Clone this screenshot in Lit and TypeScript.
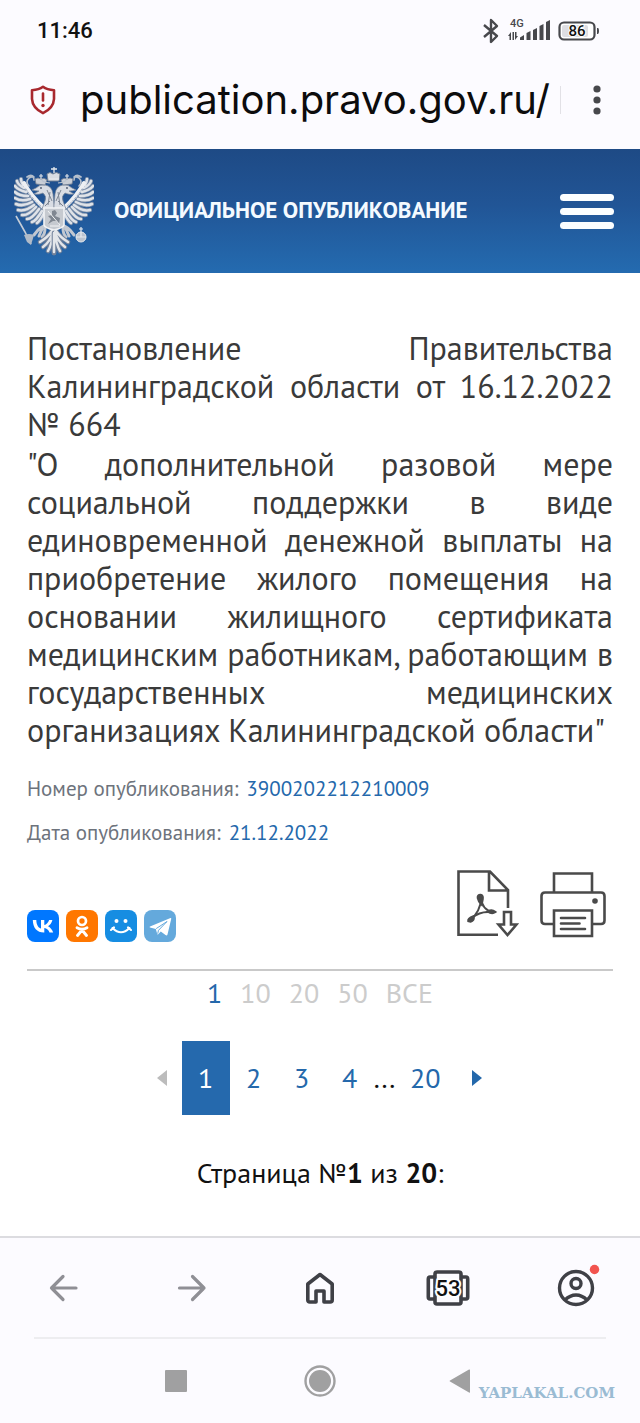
import { LitElement, html, css, svg } from 'lit';
import { customElement, property, state } from 'lit/decorators.js';
import { classMap } from 'lit/directives/class-map.js';

// Feathers of one wing, root to tip; the other wing is mirrored.
const FEATHERS = [
  'M9 20 Q7 17 7 14',
  'M10 23 Q4 20 3 16',
  'M12 27 Q4 25 1 21',
  'M14 31 Q5 31 1 27',
  'M16 34 Q7 37 1 33',
  'M18 37 Q9 42 2 39',
  'M20 40 Q11 47 4 45',
  'M22 42 Q14 51 8 50',
  'M25 44 Q18 54 13 54',
  'M28 46 Q22 56 18 57',
  'M30 48 Q26 56 23 58',
];

@customElement('state-emblem')
export class StateEmblem extends LitElement {
  static override styles = css`
    :host {
      display: block;
      width: 80px;
      height: 92px;
    }

    svg {
      display: block;
      width: 100%;
      height: 100%;
    }
  `;

  private _half() {
    return svg`
      <g stroke-linecap="round" fill="none">
        ${FEATHERS.map((d) => svg`<path d=${d} stroke="#7d8fa9" stroke-width="4.2" />`)}
        ${FEATHERS.map((d) => svg`<path d=${d} stroke="#dfe3e9" stroke-width="2.5" />`)}
        <path d="M10 18 Q17 31 30 43" stroke="#eef0f3" stroke-width="4" />
        <path d="M12 24 Q19 35 29 43" stroke="#8e9bb0" stroke-width="1" stroke-dasharray="1.5 2" />
        <path d="M15 21 Q11 17 15 13 Q20 10 20 15 M13 12 Q17 9 20 12" stroke="#b5bfcc" stroke-width="1.7" />
      </g>
      <path d="M40 40 L39 29 Q38 21 31 20 Q26 19 22 23 L18 25 Q22 26 25 26 L20 29 Q25 30 29 28 Q33 31 31 36 L28 44 L40 50 Z" fill="#d9dde4" stroke="#7c8899" stroke-width="0.7" />
      <path d="M36 27 L34 40 M33 25 L38 36 M31 41 L36 36" stroke="#7c8593" stroke-width="1" fill="none" />
      <circle cx="27" cy="23" r="0.9" fill="#49566c" />
      <path d="M22 19 L21 14 Q24 12 27 14 Q30 12 33 15 L31 20 Z" fill="#c9ced6" stroke="#717e91" stroke-width="0.8" />
      <path d="M27 9 V14 M25 11 H29" stroke="#dce1e8" stroke-width="1.2" />
      <path d="M33 60 Q28 61 24 65 L20 70 M28 64 L25 71 M31 63 Q31 69 28 72" stroke="#c2c8d1" stroke-width="3" fill="none" stroke-linecap="round" />
      <path d="M38 66 Q34 72 26 77 M39 67 Q36 77 29 82 M39 68 Q38 79 34 86 M40 68 V88" stroke="#71819a" stroke-width="4.6" fill="none" stroke-linecap="round" />
      <path d="M38 66 Q34 72 26 77 M39 67 Q36 77 29 82 M39 68 Q38 79 34 86 M40 68 V87" stroke="#e3e6ea" stroke-width="2.5" fill="none" stroke-linecap="round" />
    `;
  }

  override render() {
    return html`
      <svg viewBox="0 0 80 92" role="img" aria-label="Герб России">
        <g>${this._half()}</g>
        <g transform="translate(80 0) scale(-1 1)">${this._half()}</g>
        <path d="M34 16 L33 9 Q36 6 39 9 Q42 6 46 9 L45 16 Z" fill="#d9dde3" stroke="#717e91" stroke-width="0.9" />
        <path d="M40 2 V8 M37 4 H43 M35 14 H45" stroke="#e5e8ec" stroke-width="1.3" />
        <path d="M36 18 Q28 17 28 15 M44 18 Q52 17 52 15" stroke="#bac3cf" stroke-width="1.2" fill="none" />
        <path d="M30 43 H50 V60 Q49 63 40 65 Q31 63 30 60 Z" fill="#c6cad0" stroke="#f2f3f5" stroke-width="1.6" />
        <path d="M34 59 L37 54 L34 51 L38 50 L38 46 L41 45 L43 48 L41 51 L46 53 L45 59 L42 56 L39 56 Z" fill="#808791" />
        <path d="M34 46 L46 60 M36 61 H46" stroke="#f4f5f6" stroke-width="1" />
        <path d="M2 51 L11 67 L17 79" stroke="#c4ccd7" stroke-width="1.6" fill="none" />
        <path d="M10 70 Q15 68 20 70 L17 80 L13 77 Z" fill="#b1bbc8" />
        <circle cx="67" cy="72" r="5" fill="#bcc4cf" stroke="#e6e9ed" stroke-width="1" />
        <path d="M67 62 V67 M65 64 H69 M62 72 H72 M67 67 V72" stroke="#e6e9ed" stroke-width="1.2" />
      </svg>
    `;
  }
}

@customElement('phone-status')
export class PhoneStatus extends LitElement {
  static override styles = css`
    :host {
      display: flex;
      align-items: center;
      justify-content: space-between;
      height: 60px;
      padding: 2px 40px 0 37px;
      box-sizing: border-box;
      font: 500 22px/28px Roboto, sans-serif;
      color: #111;
    }

    .icons {
      display: flex;
      align-items: center;
      gap: 8px;
    }

    svg {
      display: block;
    }
  `;

  override render() {
    return html`
      <time>11:46</time>
      <div class="icons">
        <svg width="18" height="26" viewBox="0 0 18 26" fill="none" stroke="#47484c" stroke-width="2.4" stroke-linejoin="round">
          <path d="M2 7 L15 18 L9 24 V2 L15 8 L2 19" />
        </svg>
        <svg width="42" height="26" viewBox="0 0 42 26" fill="#47484c">
          <text x="2" y="9" font-family="Roboto, sans-serif" font-size="11">4G</text>
          <path d="M0 18 L3 14 V22 H1.5 V18 Z M4.5 14 H6 V22 H4.5 Z M7 14 V22 L10 18 H8.5 V14 Z" />
          <path d="M12 22 V19.5 L16 17 V22 Z M18.5 22 V15 L22.5 13 V22 Z M25 22 V12 L29 10 V22 Z M31.5 22 V8 L35.5 6 V22 Z M38 22 V4 L42 2 V22 Z" />
        </svg>
        <svg width="42" height="20" viewBox="0 0 42 20">
          <rect x="1.5" y="1.5" width="35" height="17" rx="4.5" fill="#fff" stroke="#47484c" stroke-width="2.2" />
          <rect x="4" y="4" width="26" height="12" rx="2" fill="#dedee2" />
          <path d="M39 7 H40 Q41 7 41 10 Q41 13 40 13 H39 Z" fill="#47484c" />
          <text x="19" y="15" text-anchor="middle" font-family="Roboto, sans-serif" font-size="15" font-weight="500" stroke="#fff" stroke-width="2" paint-order="stroke" fill="#111">86</text>
        </svg>
      </div>
    `;
  }
}

@customElement('share-button')
export class ShareButton extends LitElement {
  @property() network = '';

  static override styles = css`
    :host {
      display: block;
    }

    a,
    svg {
      display: block;
      width: 32px;
      height: 32px;
    }
  `;

  private _glyph() {
    switch (this.network) {
      case 'VK':
        return svg`
          <rect width="32" height="32" rx="8" fill="#07f" />
          <path d="M16.9 22.5 C9.9 22.5 6 17.8 5.8 10 H9.3 C9.4 15.7 12 18.1 14 18.6 V10 H17.3 V14.9 C19.3 14.7 21.4 12.5 22.1 10 H25.4 C24.9 13 22.6 15.3 21 16.2 C22.6 17 25.2 19 26.2 22.5 H22.5 C21.7 20.1 19.8 18.2 17.3 18 V22.5 Z" fill="#fff" />`;
      case 'OK':
        return svg`
          <rect width="32" height="32" rx="8" fill="#f70" />
          <circle cx="16" cy="11" r="4" fill="none" stroke="#fff" stroke-width="2.7" />
          <path d="M11 17.8 Q16 20.8 21 17.8 M16 20 L11.5 25.5 M16 20 L20.5 25.5" fill="none" stroke="#fff" stroke-width="2.9" stroke-linecap="round" />`;
      case 'Мой Мир':
        return svg`
          <rect width="32" height="32" rx="8" fill="#168de2" />
          <circle cx="11.5" cy="11" r="2" fill="#fff" />
          <circle cx="20.5" cy="11" r="2" fill="#fff" />
          <path d="M7.5 18 Q16 26.5 24.5 18 M6 20 L9 17.4 M23 17.4 L26 20" fill="none" stroke="#fff" stroke-width="2.1" stroke-linecap="round" />`;
      default:
        return svg`
          <rect width="32" height="32" rx="8" fill="#64a9dc" />
          <path d="M6 16.5 L26.5 8 Q27.5 7.8 27.2 9 L23.5 24.5 Q23 26 21.5 25 L16.8 21.4 L14.2 24.2 Q13.4 24.8 13.1 23.5 L11.8 19 L6 17.5 Q5 17 6 16.5 Z" fill="#fff" />
          <path d="M12.2 18.6 L23 11.5 L14.5 20.3 L13.7 23.7" fill="none" stroke="#64a9dc" stroke-width="1" />`;
    }
  }

  override render() {
    return html`
      <a href="#" aria-label=${this.network}>
        <svg viewBox="0 0 32 32">${this._glyph()}</svg>
      </a>
    `;
  }
}

@customElement('app-root')
export class AppRoot extends LitElement {
  @state() private _page = 1;
  @state() private _size = '1';

  static override styles = css`
    :host {
      display: block;
      position: relative;
      background: #fff;
      color: #111;
      font-family: 'PT Sans', 'Noto Sans', sans-serif;
    }

    svg {
      display: block;
    }

    a {
      color: #2468ab;
      text-decoration: none;
    }

    button {
      display: flex;
      align-items: center;
      justify-content: center;
      padding: 0;
      border: none;
      background: none;
      font: inherit;
      color: inherit;
      cursor: pointer;
    }

    .browser-top {
      background: #fcfbff;
    }

    .address {
      display: flex;
      align-items: center;
      height: 89px;
      padding: 0 38px 10px 30px;
      box-sizing: border-box;
    }

    .url {
      flex: 1;
      min-width: 0;
      margin: 0 0 0 24px;
      overflow: hidden;
      font: 400 40px/52px Inter, sans-serif;
      white-space: nowrap;
      color: #0c0c0d;
    }

    .divider {
      width: 1px;
      height: 28px;
      margin-right: 31px;
      background: #e2e1e6;
    }

    .banner {
      display: flex;
      align-items: center;
      height: 124px;
      padding: 0 26px 0 14px;
      box-sizing: border-box;
      background: linear-gradient(#1e4a85, #215596 45%, #246bb0);
    }

    .banner-title {
      flex: 1;
      margin: 0 0 2px 20px;
      font-size: 23px;
      font-weight: 700;
      line-height: 28px;
      color: #f4faff;
    }

    .burger {
      flex-direction: column;
      gap: 7px;
    }

    .burger span {
      width: 54px;
      height: 7px;
      border-radius: 4px;
      background: #fbfeff;
    }

    .document {
      padding: 56px 27px 0;
    }

    .subject {
      margin: 0 0 2px;
      font-size: 32px;
      line-height: 38px;
      text-align: justify;
      color: #3a3a3a;
    }

    .meta {
      display: grid;
      gap: 14px;
      margin: 25px 0 0;
    }

    .meta div {
      display: flex;
      align-items: baseline;
      gap: 8px;
      line-height: 30px;
    }

    .meta dt {
      font-size: 21px;
      color: #6d737c;
    }

    .meta dd {
      margin: 0;
      font-size: 21px;
    }

    .actions {
      display: flex;
      align-items: flex-end;
      justify-content: space-between;
      margin-top: 22px;
      padding-bottom: 27px;
      border-bottom: 2px solid #c9c9c9;
    }

    .share {
      display: flex;
      gap: 7px;
    }

    .files {
      display: flex;
      gap: 21px;
      padding: 0 7px 4px 0;
    }

    .sizes {
      display: flex;
      justify-content: center;
      gap: 18px;
      padding-top: 4px;
      font-size: 28px;
      line-height: 36px;
      color: #ccc;
    }

    .active-size {
      color: #2468ab;
    }

    .pager {
      display: flex;
      align-items: center;
      justify-content: center;
      margin-top: 30px;
      font-size: 28px;
      line-height: 74px;
    }

    .pager button {
      width: 48px;
      height: 74px;
      color: #2468ab;
    }

    .pager .current {
      background: #2569ad;
      color: #fff;
    }

    .pager .last {
      width: 60px;
    }

    .pager .prev {
      width: 25px;
      justify-content: flex-start;
    }

    .pager .next {
      width: 28px;
      justify-content: flex-end;
    }

    .summary {
      margin: 0;
      padding: 40px 0 45px;
      text-align: center;
      font-size: 28px;
      line-height: 36px;
    }

    .browser-bottom {
      background: #fcfbff;
      border-top: 2px solid #dcdce0;
    }

    .toolbar {
      display: grid;
      grid-template-columns: repeat(5, 1fr);
      height: 99px;
    }

    .system {
      display: grid;
      grid-template-columns: repeat(3, 1fr);
      height: 86px;
      margin: 0 34px;
      padding: 0 70px;
      box-sizing: border-box;
      border-top: 2px solid #ededf0;
    }

    .watermark {
      position: absolute;
      right: 25px;
      bottom: 20px;
      font: 700 15px/20px 'DejaVu Serif', serif;
      color: #9abbd3;
    }
  `;

  private _pageButton(n: number) {
    return html`
      <button
        type="button"
        class=${classMap({ current: n === this._page, last: n === 20 })}
        @click=${() => (this._page = n)}
      >
        ${n}
      </button>
    `;
  }

  private _renderBrowserTop() {
    return html`
      <header class="browser-top">
        <phone-status></phone-status>
        <div class="address">
          <svg width="26" height="30" viewBox="0 0 26 30" fill="none" stroke="#a8282e" stroke-width="2.6" stroke-linejoin="round">
            <path d="M13 1.8 Q17 4.8 24 5.2 V14 Q23.5 23 13 28.2 Q2.5 23 2 14 V5.2 Q9 4.8 13 1.8 Z" />
            <path d="M13 8.5 V15.5" stroke-linecap="round" />
            <circle cx="13" cy="20.5" r="1.7" fill="#a8282e" stroke="none" />
          </svg>
          <div class="url">publication.pravo.gov.ru/</div>
          <span class="divider"></span>
          <button type="button" aria-label="Меню браузера">
            <svg width="10" height="30" viewBox="0 0 10 30" fill="#47484c">
              <circle cx="5" cy="4" r="3.6" />
              <circle cx="5" cy="15" r="3.6" />
              <circle cx="5" cy="26" r="3.6" />
            </svg>
          </button>
        </div>
      </header>
    `;
  }

  private _renderFiles() {
    return html`
      <div class="files">
        <a href="#" aria-label="Скачать PDF">
          <svg width="62" height="68" viewBox="0 0 62 68" fill="none" stroke="#4a4a4a" stroke-width="2.6">
            <path d="M41 64.7 H1.5 V1.5 H33 L51 20 V38 M32 1.5 V20.5 H51" />
            <path d="M47 42 H54 V54.5 H59.5 L50.5 65 L41.5 54.5 H47 Z" />
            <path d="M23.5 27 Q25 40 36 42 M24.5 28 Q23 42 14 49 M15 48 Q24 40 37 42.5" stroke-width="2" />
            <path d="M21 28 Q20.5 25 23.5 25 Q26 25.5 25.5 29 L24.5 34 Q21.5 31 21 28 Z M38 42 Q35 44 31 41.5 Q35 39.5 38 42 Z M11.5 51 Q11 48.5 16.5 46.5 Q17 50.5 13.5 51.5 Z" fill="#4a4a4a" />
          </svg>
        </a>
        <a href="#" aria-label="Печать">
          <svg width="66" height="68" viewBox="0 0 66 68" fill="none" stroke="#4a4a4a" stroke-width="2.6">
            <path d="M14 22 V3.5 H52 V22 M14 54 H5 Q1.5 54 1.5 50.5 V26 Q1.5 22.5 5 22.5 H61 Q64.5 22.5 64.5 26 V50.5 Q64.5 54 61 54 H52" />
            <path d="M14 40.5 H52 V66 H14 Z" />
            <path d="M21 48 H45 M21 53.5 H39.5 M21 59 H45" stroke-linecap="round" />
            <circle cx="55" cy="31" r="2.8" fill="#4a4a4a" stroke="none" />
          </svg>
        </a>
      </div>
    `;
  }

  private _renderDocument() {
    return html`
      <main class="document">
        <p class="subject">Постановление Правительства Калининградской области от 16.12.2022 № 664</p>
        <p class="subject">"О дополнительной разовой мере социальной поддержки в виде единовременной денежной выплаты на приобретение жилого помещения на основании жилищного сертификата медицинским работникам, работающим в государственных медицинских организациях Калининградской области"</p>
        <dl class="meta">
          <div><dt>Номер опубликования:</dt><dd><a href="#">3900202212210009</a></dd></div>
          <div><dt>Дата опубликования:</dt><dd><a href="#">21.12.2022</a></dd></div>
        </dl>
        <div class="actions">
          <div class="share">
            ${['VK', 'OK', 'Мой Мир', 'Telegram'].map(
              (name) => html`<share-button network=${name}></share-button>`
            )}
          </div>
          ${this._renderFiles()}
        </div>
        <div class="sizes">
          ${['1', '10', '20', '50', 'ВСЕ'].map(
            (size) => html`
              <button
                type="button"
                class=${classMap({ 'active-size': size === this._size })}
                @click=${() => (this._size = size)}
              >
                ${size}
              </button>
            `
          )}
        </div>
        <nav class="pager">
          <button type="button" class="prev" aria-label="Назад">
            <svg width="10" height="18" viewBox="0 0 10 18"><path d="M10 1 V17 L0 9 Z" fill="#bcbcbc" /></svg>
          </button>
          ${[1, 2, 3, 4].map((n) => this._pageButton(n))}
          <span>...</span>
          ${this._pageButton(20)}
          <button type="button" class="next" aria-label="Вперёд">
            <svg width="12" height="18" viewBox="0 0 12 18"><path d="M1 1 V17 L11 9 Z" fill="#2468ab" /></svg>
          </button>
        </nav>
        <p class="summary">Страница №<b>${this._page}</b> из <b>20</b>:</p>
      </main>
    `;
  }

  private _renderBrowserBottom() {
    return html`
      <footer class="browser-bottom">
        <div class="toolbar">
          <button type="button" aria-label="Назад">
            <svg width="30" height="30" viewBox="0 0 30 30" fill="none" stroke="#8f8f95" stroke-width="3.2" stroke-linecap="round" stroke-linejoin="round">
              <path d="M27 15 H2.5 M14 3.5 L2.5 15 L14 26.5" />
            </svg>
          </button>
          <button type="button" aria-label="Вперёд">
            <svg width="30" height="30" viewBox="0 0 30 30" fill="none" stroke="#8f8f95" stroke-width="3.2" stroke-linecap="round" stroke-linejoin="round">
              <path d="M2.5 15 H27 M15.5 3.5 L27 15 L15.5 26.5" />
            </svg>
          </button>
          <button type="button" aria-label="Домой">
            <svg width="30" height="32" viewBox="0 0 30 32" fill="none" stroke="#3f4046" stroke-width="3.6" stroke-linejoin="round">
              <path d="M2.8 12 L15 2.5 L27.2 12 V28 Q27.2 30 25.2 30 H19 V19 H11 V30 H4.8 Q2.8 30 2.8 28 Z" />
            </svg>
          </button>
          <button type="button" aria-label="Вкладки">
            <svg width="44" height="38" viewBox="0 0 44 38" fill="none" stroke="#3f4046" stroke-width="3.6" stroke-linejoin="round">
              <path d="M9 8 H4 Q2.3 8 2.3 10 V28 Q2.3 30 4 30 H9 M35 8 H40 Q41.7 8 41.7 10 V28 Q41.7 30 40 30 H35" />
              <rect x="9" y="3" width="26" height="32" rx="2" />
              <text x="22" y="27" text-anchor="middle" font-family="Roboto, sans-serif" font-size="22" font-weight="500" stroke="#fff" stroke-width="4" paint-order="stroke" fill="#111">53</text>
            </svg>
          </button>
          <button type="button" aria-label="Профиль">
            <svg width="48" height="48" viewBox="-2 0 48 48" fill="none" stroke="#3f4046" stroke-width="3.4">
              <circle cx="22" cy="24" r="16.5" />
              <circle cx="22" cy="19.5" r="5" />
              <path d="M11 36 Q16 31 22 31 Q28 31 33 36" />
              <circle cx="40.5" cy="5.5" r="4.7" fill="#f2544f" stroke="none" />
            </svg>
          </button>
        </div>
        <div class="system">
          <button type="button" aria-label="Недавние">
            <svg width="22" height="22" viewBox="0 0 22 22"><rect width="22" height="22" rx="1" fill="#a0a0a1" /></svg>
          </button>
          <button type="button" aria-label="Главный экран">
            <svg width="32" height="32" viewBox="0 0 32 32">
              <circle cx="16" cy="16" r="14.5" fill="none" stroke="#a0a0a1" stroke-width="2.4" />
              <circle cx="16" cy="16" r="11" fill="#a0a0a1" />
            </svg>
          </button>
          <button type="button" aria-label="Вернуться">
            <svg width="32" height="26" viewBox="0 0 32 26"><path d="M22 2 V24 Q22 25 21 24.4 L2 13.6 Q1 13 2 12.4 L21 1.6 Q22 1 22 2 Z" fill="#a0a0a1" /></svg>
          </button>
        </div>
      </footer>
    `;
  }

  override render() {
    return html`
      ${this._renderBrowserTop()}
      <div class="banner">
        <state-emblem></state-emblem>
        <div class="banner-title">ОФИЦИАЛЬНОЕ ОПУБЛИКОВАНИЕ</div>
        <button type="button" class="burger" aria-label="Меню">
          <span></span><span></span><span></span>
        </button>
      </div>
      ${this._renderDocument()} ${this._renderBrowserBottom()}
      <div class="watermark">YAPLAKAL.COM</div>
    `;
  }
}

declare global {
  interface HTMLElementTagNameMap {
    'app-root': AppRoot;
    'phone-status': PhoneStatus;
    'share-button': ShareButton;
    'state-emblem': StateEmblem;
  }
}
